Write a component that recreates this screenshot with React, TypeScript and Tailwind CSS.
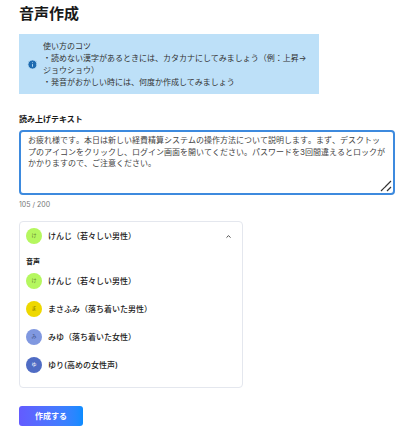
import { ChevronUp, Info } from "lucide-react";

const voices = [
  { id: "kenji", kana: "け", name: "けんじ（若々しい男性）", color: "bg-[#b5f75f]", text: "text-[#5f7f30]" },
  { id: "masa", kana: "ま", name: "まさふみ（落ち着いた男性）", color: "bg-[#eed800]", text: "text-[#7a6f00]" },
  { id: "miyu", kana: "み", name: "みゆ（落ち着いた女性）", color: "bg-[#8098e0]", text: "text-[#2f3f70]" },
  { id: "yuri", kana: "ゆ", name: "ゆり(高めの女性声)", color: "bg-[#4f6cc4]", text: "text-white" },
];

const body =
  "お疲れ様です。本日は新しい経費精算システムの操作方法について説明します。まず、デスクトップのアイコンをクリックし、ログイン画面を開いてください。パスワードを3回間違えるとロックがかかりますので、ご注意ください。";

function Avatar({ kana, color, text }: { kana: string; color: string; text: string }) {
  return (
    <div className={`w-4 h-4 rounded-full flex items-center justify-center text-[5px] ${color} ${text}`}>
      {kana}
    </div>
  );
}

export default function App() {
  return (
    <div className="w-[409px] h-[438px] overflow-hidden bg-white text-[#1a1a1a] font-['Inter','Noto_Sans_CJK_JP',sans-serif]">
      <div className="pl-[19px] pr-[14px] pt-[4px]">
        <h1 className="text-[15px] leading-[20px] font-bold">音声作成</h1>

        <div className="mt-[10px] w-[300px] h-[60px] bg-[#bde0f8] flex items-center pl-[8px] pr-[8px] text-[8px] leading-[12px] text-[#333]">
          <Info size={11} className="shrink-0 fill-[#1f6bb0] text-[#bde0f8]" />
          <div className="ml-[5px]">
            <div>使い方のコツ</div>
            <div>・読めない漢字があるときには、カタカナにしてみましょう（例：上昇→ジョウショウ）</div>
            <div>・発音がおかしい時には、何度か作成してみましょう</div>
          </div>
        </div>

        <div className="mt-[20px] text-[8px] leading-[11px] font-bold">読み上げテキスト</div>
        <div className="relative mt-[5px] w-[376px] h-[65px]">
          <textarea
            defaultValue={body}
            className="block w-full h-full resize-none rounded-[4px] border-2 border-[#3d8ade] pl-[7px] pr-[7px] py-[3px] text-[8px] leading-[11.5px] text-[#444] outline-none [font-kerning:none] [text-spacing-trim:space-all] [text-autospace:no-autospace]"
          />
          <svg viewBox="0 0 12 12" className="absolute right-[3px] bottom-[3px] w-[12px] h-[12px] text-[#333]">
            <path d="M1 11 L11 1 M7 11 L11 7" stroke="currentColor" strokeWidth="1.2" fill="none" />
          </svg>
        </div>
        <div className="mt-[5px] text-[7px] leading-[10px] text-[#777]">105 / 200</div>

        <div className="mt-[11px] w-[224px] h-[167px] rounded-[4px] border border-[#e4e7ee]">
          <div className="h-[28px] flex items-center pl-[6px] pr-[10px]">
            <Avatar {...voices[0]} />
            <span className="ml-[6px] text-[8px] font-medium">{voices[0].name}</span>
            <ChevronUp size={7} strokeWidth={3} className="ml-auto text-[#333]" />
          </div>
          <div className="mt-[7px] pl-[6px] text-[7px] leading-[10px] font-bold">音声</div>
          <div className="mt-[6px] flex flex-col gap-[12px] pl-[6px]">
            {voices.map((v) => (
              <div key={v.id} className="h-[16px] flex items-center">
                <Avatar {...v} />
                <span className="ml-[6px] text-[8px] font-medium">{v.name}</span>
              </div>
            ))}
          </div>
        </div>

        <button className="mt-[18px] block w-[64px] h-[20px] rounded-[3px] bg-gradient-to-r from-[#635bff] to-[#0a8cff] text-white text-[8px] font-bold">
          作成する
        </button>
      </div>
    </div>
  );
}
